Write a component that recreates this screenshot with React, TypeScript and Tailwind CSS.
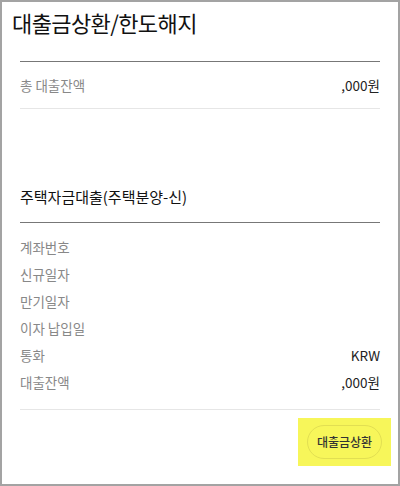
import React from 'react'

const font = { fontFamily: '"Noto Sans CJK KR", "Noto Sans", sans-serif' }

const rows: { label: string; value?: string }[] = [
  { label: '계좌번호' },
  { label: '신규일자' },
  { label: '만기일자' },
  { label: '이자 납입일' },
  { label: '통화', value: 'KRW' },
  { label: '대출잔액', value: ',000원' },
]

export default function App() {
  return (
    <div style={font} className="w-[400px] h-[486px] bg-white border-2 border-[#a3a3a3] overflow-hidden">
      <h1 className="pt-[7px] pl-[10px] text-[22px] leading-[26px] text-[#111] tracking-[-0.6px]">
        대출금상환/한도해지
      </h1>

      <div className="px-[18px]">
        <div className="mt-[26px] h-px bg-[#777]" />
        <div className="h-[46px] flex items-center justify-between text-[13.5px]">
          <span className="text-[#888]">총 대출잔액</span>
          <span className="text-[#222]">,000원</span>
        </div>
        <div className="h-px bg-[#e6e6e6]" />

        <h2 className="mt-[77px] text-[15px] leading-[22px] text-[#111]">주택자금대출(주택분양-신)</h2>
        <div className="mt-[14px] h-px bg-[#777]" />

        <div className="pt-[11px]">
          {rows.map(r => (
            <div key={r.label} className="h-[27px] flex items-center justify-between text-[13.5px]">
              <span className="text-[#888]">{r.label}</span>
              {r.value && <span className="text-[#222]">{r.value}</span>}
            </div>
          ))}
        </div>
        <div className="mt-[13px] h-px bg-[#e6e6e6]" />

        <div className="flex justify-end mt-[8px] mr-[-11px]">
          <div className="bg-[#f7f65a] px-[9px] py-[7px]">
            <button className="w-[75px] h-[34px] rounded-full border border-[#e2df52] text-[12px] font-medium text-[#333]">
              대출금상환
            </button>
          </div>
        </div>
      </div>
    </div>
  )
}
